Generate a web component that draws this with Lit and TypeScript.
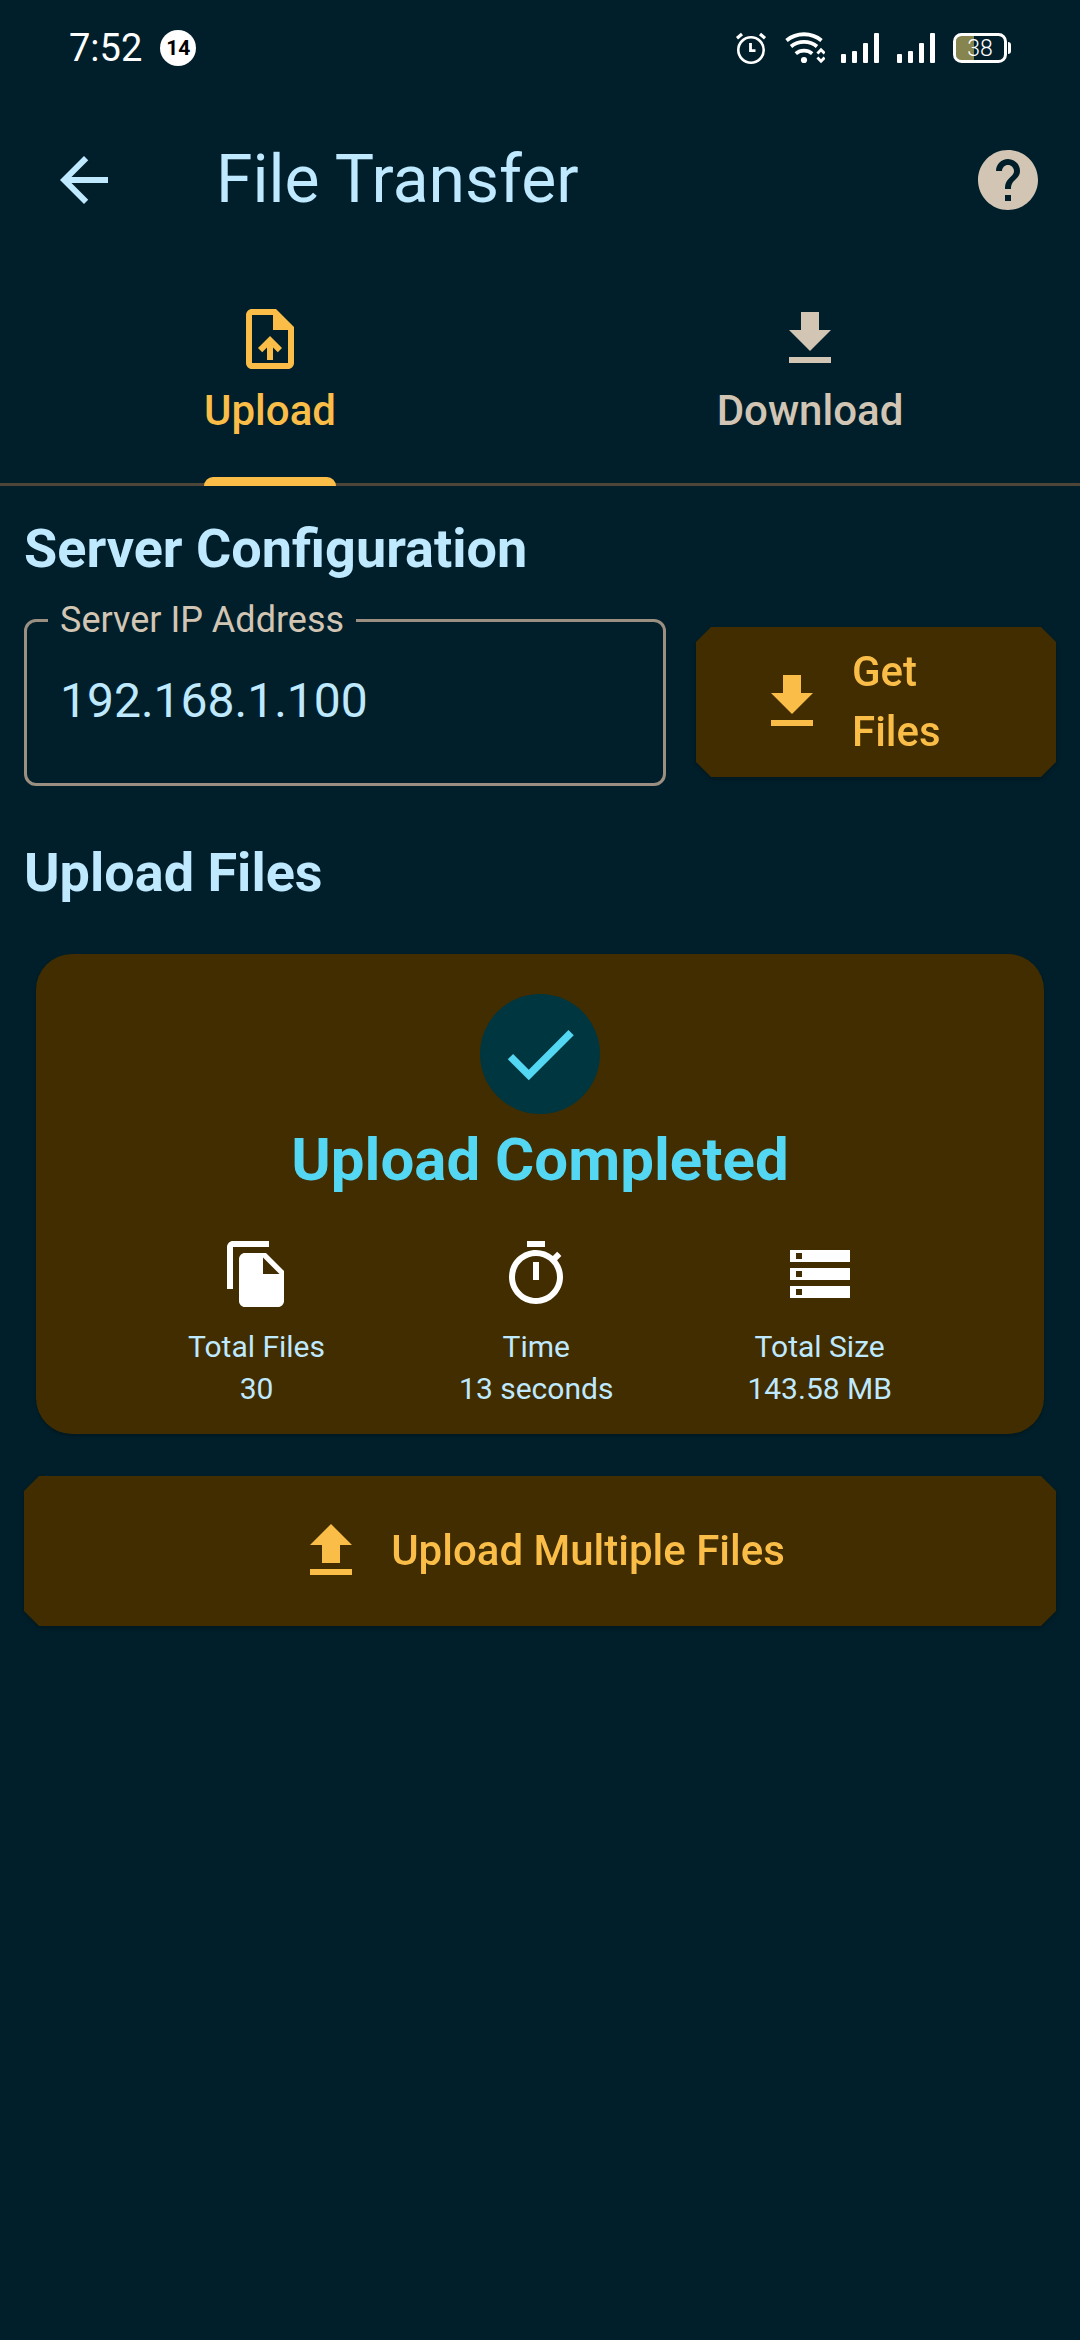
import { LitElement, html, svg, css, type TemplateResult } from "lit";
import { customElement, property, state } from "lit/decorators.js";
import { classMap } from "lit/directives/class-map.js";

const ICONS: Record<string, string> = {
  back: "M20 11H7.83l5.59-5.59L12 4l-8 8 8 8 1.41-1.41L7.83 13H20v-2z",
  help: "M12 2C6.48 2 2 6.48 2 12s4.48 10 10 10 10-4.48 10-10S17.52 2 12 2zm1 17h-2v-2h2v2zm2.07-7.75l-.9.92C13.45 12.9 13 13.5 13 15h-2v-.5c0-1.1.45-2.1 1.17-2.83l1.24-1.26c.37-.36.59-.86.59-1.41 0-1.1-.9-2-2-2s-2 .9-2 2H8c0-2.21 1.79-4 4-4s4 1.79 4 4c0 .88-.36 1.68-.93 2.25z",
  uploadFile:
    "M14 2H6c-1.1 0-1.99.9-1.99 2L4 20c0 1.1.89 2 1.99 2H18c1.1 0 2-.9 2-2V8l-6-6zm4 18H6V4h7v5h5v11zM8 15.01l1.41 1.41L11 14.84V19h2v-4.16l1.59 1.59L16 15.01 12.01 11z",
  download: "M19 9h-4V3H9v6H5l7 7 7-7zM5 18v2h14v-2H5z",
  upload: "M9 16h6v-6h4l-7-7-7 7h4v6zm-4 2h14v2H5v-2z",
  check: "M9 16.17L4.83 12l-1.42 1.41L9 19 21 7l-1.41-1.41z",
  copy: "M16 1H4c-1.1 0-2 .9-2 2v14h2V3h12V1zm-1 4l6 6v10c0 1.1-.9 2-2 2H7.99C6.89 23 6 22.1 6 21l.01-14c0-1.1.89-2 1.99-2h7zm-1 7h5.5L14 6.5V12z",
  timer:
    "M15 1H9v2h6V1zm-4 13h2V8h-2v6zm8.03-6.61l1.42-1.42c-.43-.51-.9-.99-1.41-1.41l-1.42 1.42C16.07 4.74 14.12 4 12 4c-4.97 0-9 4.03-9 9s4.02 9 9 9 9-4.03 9-9c0-2.12-.74-4.07-1.97-5.61zM12 20c-3.87 0-7-3.13-7-7s3.13-7 7-7 7 3.13 7 7-3.13 7-7 7z",
  storage:
    "M2 20h20v-4H2v4zm2-3h2v2H4v-2zM2 4v4h20V4H2zm4 3H4V5h2v2zm-4 7h20v-4H2v4zm2-3h2v2H4v-2z",
};

@customElement("md-icon")
export class MdIcon extends LitElement {
  static styles = css`
    :host {
      display: block;
      flex: none;
      width: 72px;
      height: 72px;
    }
    .glyph {
      display: block;
      width: 100%;
      height: 100%;
      fill: currentColor;
    }
  `;

  @property() name = "";

  render() {
    return html`<svg class="glyph" viewBox="0 0 24 24" aria-hidden="true">
      <path d=${ICONS[this.name] ?? ""} />
    </svg>`;
  }
}

@customElement("status-bar")
export class StatusBar extends LitElement {
  static styles = css`
    :host {
      display: flex;
      align-items: center;
      justify-content: space-between;
      height: 96px;
      padding: 0 69px;
      color: #fff;
    }
    .group {
      display: flex;
      align-items: center;
      gap: 16px;
    }
    .start {
      gap: 18px;
    }
    .time {
      font-size: 38px;
      line-height: 48px;
    }
    .badge {
      display: grid;
      place-items: center;
      width: 36px;
      height: 36px;
      border-radius: 50%;
      background: #fff;
      color: #000;
      font-size: 21px;
      font-weight: 700;
      line-height: 36px;
    }
    .glyph {
      display: block;
      width: 40px;
      height: 32px;
      fill: none;
      stroke: #fff;
    }
    .solid {
      fill: #fff;
      stroke: none;
    }
    .battery {
      width: 58px;
    }
    .charge {
      fill: #86844f;
      stroke: none;
    }
    .level {
      fill: #fff;
      stroke: none;
      font-size: 23px;
      font-weight: 300;
    }
  `;

  private signal(): TemplateResult {
    const tops = [22, 19, 11, 1];
    return html`<svg class="glyph" viewBox="0 0 40 32" aria-hidden="true">
      ${tops.map(
        (top, i) =>
          svg`<rect class="solid" x=${i * 11} y=${top} width="5" height=${31 - top} rx="1" />`
      )}
    </svg>`;
  }

  render() {
    return html`
      <div class="group start">
        <span class="time">7:52</span>
        <span class="badge">14</span>
      </div>
      <div class="group">
        <svg class="glyph" viewBox="0 0 40 32" aria-hidden="true">
          <circle cx="22" cy="18" r="12.7" stroke-width="2.6" />
          <path d="M8 6.2l5-4.2M36 6.2l-5-4.2" stroke-width="3.2" />
          <path d="M21.5 11v7.7h5" stroke-width="2.8" />
        </svg>
        <svg class="glyph" viewBox="0 0 40 32" aria-hidden="true">
          <path d="M1.5 8.4a28 28 0 0 1 35 0" stroke-width="3.8" />
          <path d="M6 14.4a21 21 0 0 1 26 0" stroke-width="3.8" />
          <path d="M10.8 21.6a13 13 0 0 1 16.4 0" stroke-width="3.8" />
          <circle class="solid" cx="19" cy="28" r="3.1" />
          <path d="M32.4 21.4l3.6-3.6 3.6 3.6M32.4 25.6l3.6 3.6 3.6-3.6" stroke-width="2.8" />
        </svg>
        ${this.signal()} ${this.signal()}
        <svg class="glyph battery" viewBox="0 0 58 32">
          <path class="charge" d="M9 3h12v26H9a6 6 0 0 1-6-6V9a6 6 0 0 1 6-6z" />
          <rect x="1.5" y="2.5" width="51" height="27" rx="7" stroke-width="3" />
          <path class="solid" d="M55 10c2 0 3 1 3 3v6c0 2-1 3-3 3z" />
          <text class="level" x="27" y="24" text-anchor="middle">38</text>
        </svg>
      </div>
    `;
  }
}

interface Stat {
  icon: string;
  label: string;
  value: string;
}

@customElement("app-root")
export class AppRoot extends LitElement {
  static styles = css`
    :host {
      display: block;
      min-height: 100vh;
      background: #001f2a;
      color: #bfe9ff;
      font-family: Roboto, "Liberation Sans", sans-serif;
    }
    button,
    input {
      border: 0;
      margin: 0;
      padding: 0;
      background: none;
      color: inherit;
      font: inherit;
    }
    .app-bar {
      display: flex;
      align-items: center;
      height: 168px;
      padding: 0 36px 0 48px;
    }
    .title {
      flex: 1;
      margin: 0 0 0 96px;
      font-size: 66px;
      font-weight: 400;
      line-height: 84px;
    }
    .app-bar .help,
    .tab {
      color: #d2c5b4;
    }
    .tabs {
      display: grid;
      grid-template-columns: 1fr 1fr;
      box-shadow: inset 0 -3px #4e4639;
    }
    .tab {
      display: flex;
      justify-content: center;
      font-size: 42px;
      font-weight: 500;
      line-height: 60px;
    }
    .tab-body {
      display: flex;
      flex-direction: column;
      align-items: center;
      gap: 6px;
      padding-top: 39px;
    }
    .tab-body::after {
      content: "";
      align-self: stretch;
      height: 9px;
      margin-top: 30px;
      border-radius: 9px 9px 0 0;
    }
    .active {
      color: #fabd48;
    }
    .active .tab-body::after {
      background: #fabd48;
    }
    .content {
      display: flex;
      flex-direction: column;
      padding: 27px 24px;
    }
    .heading {
      margin: 0;
      font-size: 54px;
      font-weight: 700;
      line-height: 72px;
    }
    .server {
      display: grid;
      grid-template-columns: minmax(0, 1fr) 360px;
      align-items: end;
      gap: 30px;
      margin: 14px 0 51px;
    }
    .field {
      min-width: 0;
      margin: 0;
      padding: 0 33px 36px;
      border: 3px solid #9a8f80;
      border-radius: 12px;
    }
    .legend {
      margin-left: -12px;
      padding: 0 12px;
      color: #d2c5b4;
      font-size: 36px;
      line-height: 42px;
    }
    .address {
      display: block;
      box-sizing: border-box;
      width: 100%;
      height: 106px;
      padding-top: 12px;
      outline: none;
      font-size: 48px;
    }
    .raised {
      display: grid;
      filter: drop-shadow(0 2px 2px rgba(0, 0, 0, 0.24));
    }
    .server .raised {
      margin-bottom: 9px;
    }
    .action {
      display: flex;
      align-items: center;
      justify-content: center;
      gap: 24px;
      min-height: 150px;
      padding: 15px 60px;
      background: #412d00;
      color: #fabd48;
      clip-path: polygon(
        15px 0,
        calc(100% - 15px) 0,
        100% 15px,
        100% calc(100% - 15px),
        calc(100% - 15px) 100%,
        15px 100%,
        0 calc(100% - 15px),
        0 15px
      );
      font-size: 42px;
      font-weight: 500;
      line-height: 60px;
      text-align: left;
    }
    .card {
      display: flex;
      flex-direction: column;
      align-items: center;
      margin: 45px 12px 42px;
      padding: 40px 18px 24px;
      border-radius: 36px;
      background: #412d00;
      box-shadow: 0 2px 3px rgba(0, 0, 0, 0.24);
    }
    .done {
      display: grid;
      place-items: center;
      width: 120px;
      height: 120px;
      border-radius: 50%;
      background: #00363f;
      color: #54d7f3;
    }
    .tick {
      width: 90px;
      height: 90px;
    }
    .result {
      margin: 4px 0 36px;
      color: #54d7f3;
      font-size: 60px;
      font-weight: 700;
      line-height: 84px;
    }
    .stats {
      display: flex;
      align-self: stretch;
      justify-content: space-evenly;
    }
    .stat {
      display: flex;
      flex-direction: column;
      align-items: center;
      font-size: 30px;
      line-height: 42px;
    }
    .stat-icon {
      margin-bottom: 16px;
      color: #fff;
    }
  `;

  @state() private tab = "Upload";
  @state() private address = "192.168.1.100";

  private readonly tabs = [
    { label: "Upload", icon: "uploadFile" },
    { label: "Download", icon: "download" },
  ];

  private readonly stats: Stat[] = [
    { icon: "copy", label: "Total Files", value: "30" },
    { icon: "timer", label: "Time", value: "13 seconds" },
    { icon: "storage", label: "Total Size", value: "143.58 MB" },
  ];

  private onAddress(event: Event) {
    this.address = (event.target as HTMLInputElement).value;
  }

  render() {
    return html`
      <status-bar></status-bar>
      <header class="app-bar">
        <button class="back" aria-label="Back"><md-icon name="back"></md-icon></button>
        <h1 class="title">File Transfer</h1>
        <button class="help" aria-label="Help"><md-icon name="help"></md-icon></button>
      </header>
      <nav class="tabs" role="tablist">
        ${this.tabs.map(
          ({ label, icon }) => html`<button
            role="tab"
            aria-selected=${this.tab === label}
            class=${classMap({ tab: true, active: this.tab === label })}
            @click=${() => (this.tab = label)}
          >
            <span class="tab-body"><md-icon name=${icon}></md-icon>${label}</span>
          </button>`
        )}
      </nav>
      <main class="content">
        <h2 class="heading">Server Configuration</h2>
        <div class="server">
          <fieldset class="field">
            <legend class="legend"><label for="address">Server IP Address</label></legend>
            <input
              id="address"
              class="address"
              type="text"
              .value=${this.address}
              @input=${this.onAddress}
            />
          </fieldset>
          <div class="raised">
            <button class="action">
              <md-icon name="download"></md-icon><span>Get Files</span>
            </button>
          </div>
        </div>
        <h2 class="heading">Upload Files</h2>
        <section class="card">
          <div class="done"><md-icon class="tick" name="check"></md-icon></div>
          <h3 class="result">Upload Completed</h3>
          <div class="stats">
            ${this.stats.map(
              ({ icon, label, value }) => html`<div class="stat">
                <md-icon class="stat-icon" name=${icon}></md-icon>
                <span>${label}</span>
                <span>${value}</span>
              </div>`
            )}
          </div>
        </section>
        <div class="raised">
          <button class="action">
            <md-icon name="upload"></md-icon><span>Upload Multiple Files</span>
          </button>
        </div>
      </main>
    `;
  }
}
